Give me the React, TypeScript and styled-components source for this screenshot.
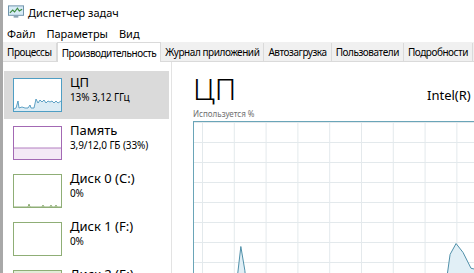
import styled, { createGlobalStyle } from "styled-components";

const GlobalStyle = createGlobalStyle`
  html, body {
    margin: 0;
    padding: 0;
    background: #ffffff;
    overflow: hidden;
  }
  body {
    font-family: "Noto Sans", "Open Sans", sans-serif;
    color: #000000;
  }
`;

const Window = styled.div`
  width: 474px;
  height: 273px;
  overflow: hidden;
  display: flex;
  flex-direction: column;
  border-left: 3px solid #a8a8a8;
  box-sizing: border-box;
  background: #ffffff;
`;

const TitleBar = styled.div`
  height: 24px;
  display: flex;
  align-items: center;
  gap: 4px;
  padding-left: 5px;
  font-size: 11px;
`;

const MenuBar = styled.div`
  height: 18px;
  display: flex;
  align-items: center;
  gap: 11px;
  padding-left: 4px;
  font-size: 11px;
`;

const TabStrip = styled.div`
  height: 19px;
  flex-shrink: 0;
  display: flex;
  align-items: flex-end;
  background: #f0f0f0;
  border-bottom: 1px solid #dadada;
`;

const Tab = styled.div<{ $active?: boolean }>`
  height: ${(p) => (p.$active ? "20px" : "18px")};
  margin-bottom: ${(p) => (p.$active ? "-1px" : "0")};
  display: flex;
  align-items: center;
  padding: 0 4px;
  font-size: 10px;
  letter-spacing: -0.45px;
  white-space: nowrap;
  background: ${(p) => (p.$active ? "#ffffff" : "transparent")};
  border-right: 1px solid #dadada;
  border-top: ${(p) => (p.$active ? "1px solid #dadada" : "none")};
  border-left: ${(p) => (p.$active ? "1px solid #dadada" : "none")};
  box-sizing: border-box;
`;

const Body = styled.div`
  flex: 1;
  display: flex;
  min-height: 0;
`;

const Sidebar = styled.div`
  width: 169px;
  flex-shrink: 0;
  border-right: 1px solid #e3e3e3;
  padding: 9px 0 0 1px;
  box-sizing: border-box;
  display: flex;
  flex-direction: column;
`;

const Item = styled.div<{ $selected?: boolean }>`
  height: 48px;
  flex-shrink: 0;
  display: flex;
  align-items: flex-start;
  gap: 8px;
  padding: 7px 0 0 9px;
  margin-right: 2px;
  box-sizing: border-box;
  background: ${(p) => (p.$selected ? "#dadada" : "transparent")};
`;

const Thumb = styled.div<{ $color: string; $fill?: string }>`
  width: 49px;
  height: 34px;
  flex-shrink: 0;
  box-sizing: border-box;
  border: 1px solid ${(p) => p.$color};
  background: ${(p) => p.$fill ?? "#ffffff"};
  overflow: hidden;

  svg {
    display: block;
    width: 100%;
    height: 100%;
  }
`;

const ItemText = styled.div`
  display: flex;
  flex-direction: column;
  margin-top: -4px;
`;

const ItemName = styled.div`
  font-size: 13px;
  line-height: 17px;
`;

const ItemValue = styled.div`
  font-size: 10px;
  line-height: 13px;
  letter-spacing: -0.1px;
`;

const Main = styled.div`
  flex: 1;
  min-width: 0;
  padding: 12px 0 0 21px;
  display: flex;
  flex-direction: column;
  overflow: hidden;
`;

const Header = styled.div`
  display: flex;
  align-items: baseline;
  justify-content: space-between;
  gap: 20px;
`;

const BigTitle = styled.div`
  font-size: 30px;
  font-weight: 300;
  line-height: 30px;
`;

const CpuModel = styled.div`
  font-size: 13px;
  white-space: nowrap;
  overflow: hidden;
  width: 47px;
  flex-shrink: 0;
`;

const Caption = styled.div`
  font-size: 8px;
  color: #707070;
  line-height: 12px;
  margin-top: 4px;
`;

const Graph = styled.div`
  margin-top: 1px;
  height: 170px;
  flex-shrink: 0;
  border: 1px solid #6aa5b8;
  border-right: none;
  box-sizing: border-box;
  background-color: #ffffff;
  background-image: linear-gradient(to right, #e3e9ec 1px, transparent 1px),
    linear-gradient(to bottom, #e3e9ec 1px, transparent 1px);
  background-size: 31.8px 20px;
  background-position: 8px 20px;
  position: relative;

  svg {
    position: absolute;
    left: 0;
    top: 0;
    width: 100%;
    height: 100%;
  }
`;

const TaskIcon = () => (
  <svg width="16" height="14" viewBox="0 0 17 14">
    <rect x="0.5" y="0.5" width="16" height="10" fill="#d8ecf7" stroke="#6a8fa8" />
    <polyline points="2,8 5,5 7,7 10,3 12,6 15,4" fill="none" stroke="#3b8a3e" strokeWidth="1.2" />
    <rect x="6" y="11" width="5" height="2" fill="#8aa3b4" />
  </svg>
);

const App = () => {
  return (
    <>
      <GlobalStyle />
      <Window>
        <TitleBar>
          <TaskIcon />
          <span>Диспетчер задач</span>
        </TitleBar>
        <MenuBar>
          <span>Файл</span>
          <span>Параметры</span>
          <span>Вид</span>
        </MenuBar>
        <TabStrip>
          <Tab>Процессы</Tab>
          <Tab $active>Производительность</Tab>
          <Tab>Журнал приложений</Tab>
          <Tab>Автозагрузка</Tab>
          <Tab>Пользователи</Tab>
          <Tab>Подробности</Tab>
        </TabStrip>
        <Body>
          <Sidebar>
            <Item $selected>
              <Thumb $color="#4f9ec4">
                <svg viewBox="0 0 47 32" preserveAspectRatio="none">
                  <polygon
                    points="0,30 2,29 4,22 5,29 8,28 11,29 14,29 16,26 17,29 20,29 22,20 24,24 26,21 28,23 30,21 32,24 34,22 36,23 38,22 40,24 42,22 44,24 47,22 47,32 0,32"
                    fill="#dcecf5"
                  />
                  <polyline
                    points="0,30 2,29 4,22 5,29 8,28 11,29 14,29 16,26 17,29 20,29 22,20 24,24 26,21 28,23 30,21 32,24 34,22 36,23 38,22 40,24 42,22 44,24 47,22"
                    fill="none"
                    stroke="#3b8db8"
                    strokeWidth="0.8"
                  />
                </svg>
              </Thumb>
              <ItemText>
                <ItemName>ЦП</ItemName>
                <ItemValue>13% 3,12 ГГц</ItemValue>
              </ItemText>
            </Item>
            <Item>
              <Thumb $color="#a369b4">
                <svg viewBox="0 0 47 32" preserveAspectRatio="none">
                  <rect x="0" y="21" width="47" height="11" fill="#f4e9f6" />
                  <line x1="0" y1="21" x2="47" y2="21" stroke="#b27fc0" strokeWidth="1" />
                </svg>
              </Thumb>
              <ItemText>
                <ItemName>Память</ItemName>
                <ItemValue>3,9/12,0 ГБ (33%)</ItemValue>
              </ItemText>
            </Item>
            <Item>
              <Thumb $color="#8fae76">
                <svg viewBox="0 0 47 32" preserveAspectRatio="none">
                  <polyline
                    points="0,32 14,32 15,29 16,32 28,32 29,30 30,32 36,32 37,30 38,32 41,32 42,30 43,32 47,32"
                    fill="none"
                    stroke="#8fae76"
                    strokeWidth="1"
                  />
                </svg>
              </Thumb>
              <ItemText>
                <ItemName>Диск 0 (C:)</ItemName>
                <ItemValue>0%</ItemValue>
              </ItemText>
            </Item>
            <Item>
              <Thumb $color="#8fae76" />
              <ItemText>
                <ItemName>Диск 1 (F:)</ItemName>
                <ItemValue>0%</ItemValue>
              </ItemText>
            </Item>
            <Item>
              <Thumb $color="#8fae76" $fill="#e3ecd8" />
              <ItemText>
                <ItemName>Диск 2 (E:)</ItemName>
                <ItemValue>0%</ItemValue>
              </ItemText>
            </Item>
          </Sidebar>
          <Main>
            <Header>
              <BigTitle>ЦП</BigTitle>
              <CpuModel>Intel(R) Core(TM) i5-8400 CPU @ 2.80GHz</CpuModel>
            </Header>
            <Caption>Используется %</Caption>
            <Graph>
              <svg viewBox="0 0 281 170" preserveAspectRatio="none">
                <polygon
                  points="42,170 47,126 51,150 53,170"
                  fill="#e1eff6"
                  stroke="#4f8fa8"
                  strokeWidth="1"
                />
                <polygon
                  points="252,170 257,134 263,123 270,132 278,148 282,149 282,170"
                  fill="#e1eff6"
                  stroke="#4f8fa8"
                  strokeWidth="1"
                />
              </svg>
            </Graph>
          </Main>
        </Body>
      </Window>
    </>
  );
};

export default App;
